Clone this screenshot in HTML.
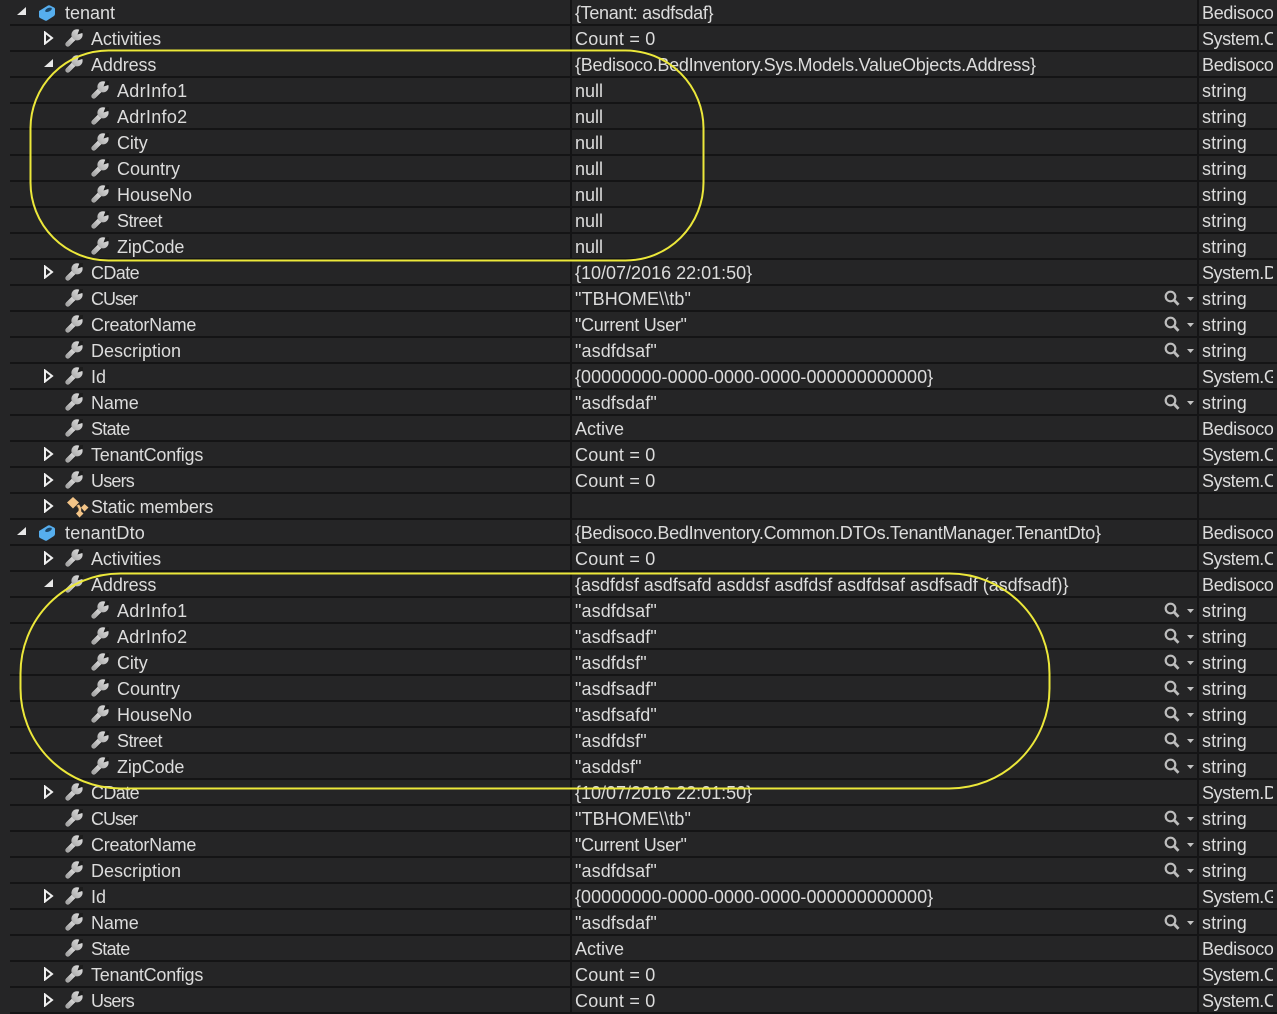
<!DOCTYPE html>
<html><head><meta charset="utf-8">
<style>
html,body{margin:0;padding:0;background:#252526;width:1277px;height:1014px;overflow:hidden}
body{position:relative;font-family:"Liberation Sans",sans-serif;font-size:18px;color:#dcdcdc}
.r{position:absolute;left:0;width:1277px;height:26px;line-height:27px;white-space:nowrap}
.r:after{content:"";position:absolute;left:10px;right:0;top:24px;height:2px;background:#141415}
.n,.v,.t{position:absolute;top:0}
.n{left:91px}.l0 .n{left:65px}.l2 .n{left:117px}
.v{left:575px}.t{left:1202px;width:71px;overflow:hidden}
.r svg{position:absolute}
.ic{left:65px;top:3px}.l0 .ic{left:38px}.l2 .ic{left:91px}
.ar{left:43px;top:5px}.l0 .ar{left:16px}
.m{left:1163px;top:4px}
.c{position:absolute;top:0;width:2px;height:1014px;background:#141415}
#o{position:absolute;left:0;top:0}
.t{letter-spacing:.15px}
.b{letter-spacing:-.3px}
.y{letter-spacing:-.45px}
.cnt{letter-spacing:.22px}
.q{letter-spacing:.1px}
.cu{letter-spacing:-.3px}
.lg{letter-spacing:-.27px}
.ten{letter-spacing:-.33px}
.idv{letter-spacing:.05px}
.ad2{letter-spacing:-.03px}
.tc{letter-spacing:-.23px}
.cn{letter-spacing:-.27px}
.sm{letter-spacing:-.2px}
.st{letter-spacing:-.5px}
.ai{letter-spacing:.3px}
.us{letter-spacing:-.8px}
.cd{letter-spacing:-.6px}
.cus{letter-spacing:-1px}
.sta{letter-spacing:-.7px}
.act{letter-spacing:-.1px}
.td{letter-spacing:.22px}
</style></head><body>
<svg width="0" height="0" style="position:absolute">
<defs>
<linearGradient id="g" x1="1" y1="0" x2="0" y2="1"><stop offset="0" stop-color="#e6e6e6"/><stop offset="1" stop-color="#a6a6a6"/></linearGradient>
<symbol id="w" viewBox="0 0 18 18"><path d="M2.800 15.200L10 8" stroke="#161616" stroke-width="6.600" stroke-linecap="round" fill="none" opacity=".6"/><path d="M2.800 15.200L10 8" stroke="url(#g)" stroke-width="5" stroke-linecap="round" fill="none"/><circle cx="12" cy="5.800" r="5.600" fill="url(#g)"/><path d="M12.500 5.500L14.500 0 18 0 18 3.800z" fill="#1c1c1c"/></symbol>
<symbol id="open" viewBox="0 0 12 12"><path d="M10 2V10H1z" fill="#e8e8e8"/></symbol>
<symbol id="shut" viewBox="0 0 12 14"><path d="M2 1.500L9 7 2 12.500z" fill="none" stroke="#f0f0f0" stroke-width="2"/></symbol>
<symbol id="cube" viewBox="0 0 18 18"><path d="M1 8L10 2.500Q11 2 12 2.500L16 4.500Q17 5 17 6L17 11Q17 12 16 13L9 17.500Q8 18 7 17.500L2 15Q1 14.500 1 13.500Z" fill="#56aeee"/><ellipse cx="10.500" cy="6.800" rx="3.600" ry="1.800" transform="rotate(-25 10.500 6.800)" fill="#1d4667"/></symbol>
<symbol id="mag" viewBox="0 0 18 18"><circle cx="7.500" cy="6.500" r="4.800" fill="none" stroke="#bdbdbd" stroke-width="2.200"/><path d="M11 10L15.500 14.800" stroke="#bdbdbd" stroke-width="2.800"/></symbol>
<symbol id="st" viewBox="0 0 24 22"><path d="M11 9L14 12V16" stroke="#5a452c" stroke-width="2" fill="none"/><path d="M2 6.500L8 1l6 5.500L8 12.500z" fill="#f3c487"/><path d="M16 11.500L19.500 8 23.500 11.500 19.500 15.500z" fill="#f3c487"/><path d="M11 17.500L14.500 14 18.500 17.500 14.500 21.500z" fill="#f3c487"/><path d="M13 9L15 12.500V16" stroke="#f3c487" stroke-width="2.400" fill="none"/></symbol>
</defs></svg>

<div class="r l0" style="top:0"><svg class="ar" width="12" height="12"><use href="#open"/></svg><svg class="ic" width="18" height="18"><use href="#cube"/></svg><span class="n">tenant</span><span class="v ten">{Tenant: asdfsdaf}</span><span class="t b">Bedisoco</span></div>
<div class="r" style="top:26px"><svg class="ar" width="12" height="14"><use href="#shut"/></svg><svg class="ic" width="18" height="18"><use href="#w"/></svg><span class="n act">Activities</span><span class="v cnt">Count = 0</span><span class="t y">System.C</span></div>
<div class="r" style="top:52px"><svg class="ar" width="12" height="12"><use href="#open"/></svg><svg class="ic" width="18" height="18"><use href="#w"/></svg><span class="n act">Address</span><span class="v lg">{Bedisoco.BedInventory.Sys.Models.ValueObjects.Address}</span><span class="t b">Bedisoco</span></div>
<div class="r l2" style="top:78px"><svg class="ic" width="18" height="18"><use href="#w"/></svg><span class="n ai">AdrInfo1</span><span class="v">null</span><span class="t">string</span></div>
<div class="r l2" style="top:104px"><svg class="ic" width="18" height="18"><use href="#w"/></svg><span class="n ai">AdrInfo2</span><span class="v">null</span><span class="t">string</span></div>
<div class="r l2" style="top:130px"><svg class="ic" width="18" height="18"><use href="#w"/></svg><span class="n act">City</span><span class="v">null</span><span class="t">string</span></div>
<div class="r l2" style="top:156px"><svg class="ic" width="18" height="18"><use href="#w"/></svg><span class="n">Country</span><span class="v">null</span><span class="t">string</span></div>
<div class="r l2" style="top:182px"><svg class="ic" width="18" height="18"><use href="#w"/></svg><span class="n">HouseNo</span><span class="v">null</span><span class="t">string</span></div>
<div class="r l2" style="top:208px"><svg class="ic" width="18" height="18"><use href="#w"/></svg><span class="n st">Street</span><span class="v">null</span><span class="t">string</span></div>
<div class="r l2" style="top:234px"><svg class="ic" width="18" height="18"><use href="#w"/></svg><span class="n act">ZipCode</span><span class="v">null</span><span class="t">string</span></div>
<div class="r" style="top:260px"><svg class="ar" width="12" height="14"><use href="#shut"/></svg><svg class="ic" width="18" height="18"><use href="#w"/></svg><span class="n cd">CDate</span><span class="v">{10/07/2016 22:01:50}</span><span class="t y">System.D</span></div>
<div class="r" style="top:286px"><svg class="ic" width="18" height="18"><use href="#w"/></svg><span class="n cus">CUser</span><span class="v q">"TBHOME\\tb"</span><svg class="m" width="32" height="18"><use href="#mag" width="18" height="18"/><path d="M24 7h7l-3.500 4z" fill="#c4c4c4"/></svg><span class="t">string</span></div>
<div class="r" style="top:312px"><svg class="ic" width="18" height="18"><use href="#w"/></svg><span class="n cn">CreatorName</span><span class="v cu">"Current User"</span><svg class="m" width="32" height="18"><use href="#mag" width="18" height="18"/><path d="M24 7h7l-3.500 4z" fill="#c4c4c4"/></svg><span class="t">string</span></div>
<div class="r" style="top:338px"><svg class="ic" width="18" height="18"><use href="#w"/></svg><span class="n">Description</span><span class="v q">"asdfdsaf"</span><svg class="m" width="32" height="18"><use href="#mag" width="18" height="18"/><path d="M24 7h7l-3.500 4z" fill="#c4c4c4"/></svg><span class="t">string</span></div>
<div class="r" style="top:364px"><svg class="ar" width="12" height="14"><use href="#shut"/></svg><svg class="ic" width="18" height="18"><use href="#w"/></svg><span class="n">Id</span><span class="v idv">{00000000-0000-0000-0000-000000000000}</span><span class="t y">System.G</span></div>
<div class="r" style="top:390px"><svg class="ic" width="18" height="18"><use href="#w"/></svg><span class="n act">Name</span><span class="v q">"asdfsdaf"</span><svg class="m" width="32" height="18"><use href="#mag" width="18" height="18"/><path d="M24 7h7l-3.500 4z" fill="#c4c4c4"/></svg><span class="t">string</span></div>
<div class="r" style="top:416px"><svg class="ic" width="18" height="18"><use href="#w"/></svg><span class="n sta">State</span><span class="v">Active</span><span class="t b">Bedisoco</span></div>
<div class="r" style="top:442px"><svg class="ar" width="12" height="14"><use href="#shut"/></svg><svg class="ic" width="18" height="18"><use href="#w"/></svg><span class="n tc">TenantConfigs</span><span class="v cnt">Count = 0</span><span class="t y">System.C</span></div>
<div class="r" style="top:468px"><svg class="ar" width="12" height="14"><use href="#shut"/></svg><svg class="ic" width="18" height="18"><use href="#w"/></svg><span class="n us">Users</span><span class="v cnt">Count = 0</span><span class="t y">System.C</span></div>
<div class="r" style="top:494px"><svg class="ar" width="12" height="14"><use href="#shut"/></svg><svg class="ic" width="24" height="22" style="top:2px"><use href="#st"/></svg><span class="n sm">Static members</span></div>
<div class="r l0" style="top:520px"><svg class="ar" width="12" height="12"><use href="#open"/></svg><svg class="ic" width="18" height="18"><use href="#cube"/></svg><span class="n td">tenantDto</span><span class="v lg">{Bedisoco.BedInventory.Common.DTOs.TenantManager.TenantDto}</span><span class="t b">Bedisoco</span></div>
<div class="r" style="top:546px"><svg class="ar" width="12" height="14"><use href="#shut"/></svg><svg class="ic" width="18" height="18"><use href="#w"/></svg><span class="n act">Activities</span><span class="v cnt">Count = 0</span><span class="t y">System.C</span></div>
<div class="r" style="top:572px"><svg class="ar" width="12" height="12"><use href="#open"/></svg><svg class="ic" width="18" height="18"><use href="#w"/></svg><span class="n act">Address</span><span class="v ad2">{asdfdsf asdfsafd asddsf asdfdsf asdfdsaf asdfsadf (asdfsadf)}</span><span class="t b">Bedisoco</span></div>
<div class="r l2" style="top:598px"><svg class="ic" width="18" height="18"><use href="#w"/></svg><span class="n ai">AdrInfo1</span><span class="v q">"asdfdsaf"</span><svg class="m" width="32" height="18"><use href="#mag" width="18" height="18"/><path d="M24 7h7l-3.500 4z" fill="#c4c4c4"/></svg><span class="t">string</span></div>
<div class="r l2" style="top:624px"><svg class="ic" width="18" height="18"><use href="#w"/></svg><span class="n ai">AdrInfo2</span><span class="v q">"asdfsadf"</span><svg class="m" width="32" height="18"><use href="#mag" width="18" height="18"/><path d="M24 7h7l-3.500 4z" fill="#c4c4c4"/></svg><span class="t">string</span></div>
<div class="r l2" style="top:650px"><svg class="ic" width="18" height="18"><use href="#w"/></svg><span class="n act">City</span><span class="v q">"asdfdsf"</span><svg class="m" width="32" height="18"><use href="#mag" width="18" height="18"/><path d="M24 7h7l-3.500 4z" fill="#c4c4c4"/></svg><span class="t">string</span></div>
<div class="r l2" style="top:676px"><svg class="ic" width="18" height="18"><use href="#w"/></svg><span class="n">Country</span><span class="v q">"asdfsadf"</span><svg class="m" width="32" height="18"><use href="#mag" width="18" height="18"/><path d="M24 7h7l-3.500 4z" fill="#c4c4c4"/></svg><span class="t">string</span></div>
<div class="r l2" style="top:702px"><svg class="ic" width="18" height="18"><use href="#w"/></svg><span class="n">HouseNo</span><span class="v q">"asdfsafd"</span><svg class="m" width="32" height="18"><use href="#mag" width="18" height="18"/><path d="M24 7h7l-3.500 4z" fill="#c4c4c4"/></svg><span class="t">string</span></div>
<div class="r l2" style="top:728px"><svg class="ic" width="18" height="18"><use href="#w"/></svg><span class="n st">Street</span><span class="v q">"asdfdsf"</span><svg class="m" width="32" height="18"><use href="#mag" width="18" height="18"/><path d="M24 7h7l-3.500 4z" fill="#c4c4c4"/></svg><span class="t">string</span></div>
<div class="r l2" style="top:754px"><svg class="ic" width="18" height="18"><use href="#w"/></svg><span class="n act">ZipCode</span><span class="v q">"asddsf"</span><svg class="m" width="32" height="18"><use href="#mag" width="18" height="18"/><path d="M24 7h7l-3.500 4z" fill="#c4c4c4"/></svg><span class="t">string</span></div>
<div class="r" style="top:780px"><svg class="ar" width="12" height="14"><use href="#shut"/></svg><svg class="ic" width="18" height="18"><use href="#w"/></svg><span class="n cd">CDate</span><span class="v">{10/07/2016 22:01:50}</span><span class="t y">System.D</span></div>
<div class="r" style="top:806px"><svg class="ic" width="18" height="18"><use href="#w"/></svg><span class="n cus">CUser</span><span class="v q">"TBHOME\\tb"</span><svg class="m" width="32" height="18"><use href="#mag" width="18" height="18"/><path d="M24 7h7l-3.500 4z" fill="#c4c4c4"/></svg><span class="t">string</span></div>
<div class="r" style="top:832px"><svg class="ic" width="18" height="18"><use href="#w"/></svg><span class="n cn">CreatorName</span><span class="v cu">"Current User"</span><svg class="m" width="32" height="18"><use href="#mag" width="18" height="18"/><path d="M24 7h7l-3.500 4z" fill="#c4c4c4"/></svg><span class="t">string</span></div>
<div class="r" style="top:858px"><svg class="ic" width="18" height="18"><use href="#w"/></svg><span class="n">Description</span><span class="v q">"asdfdsaf"</span><svg class="m" width="32" height="18"><use href="#mag" width="18" height="18"/><path d="M24 7h7l-3.500 4z" fill="#c4c4c4"/></svg><span class="t">string</span></div>
<div class="r" style="top:884px"><svg class="ar" width="12" height="14"><use href="#shut"/></svg><svg class="ic" width="18" height="18"><use href="#w"/></svg><span class="n">Id</span><span class="v idv">{00000000-0000-0000-0000-000000000000}</span><span class="t y">System.G</span></div>
<div class="r" style="top:910px"><svg class="ic" width="18" height="18"><use href="#w"/></svg><span class="n act">Name</span><span class="v q">"asdfsdaf"</span><svg class="m" width="32" height="18"><use href="#mag" width="18" height="18"/><path d="M24 7h7l-3.500 4z" fill="#c4c4c4"/></svg><span class="t">string</span></div>
<div class="r" style="top:936px"><svg class="ic" width="18" height="18"><use href="#w"/></svg><span class="n sta">State</span><span class="v">Active</span><span class="t b">Bedisoco</span></div>
<div class="r" style="top:962px"><svg class="ar" width="12" height="14"><use href="#shut"/></svg><svg class="ic" width="18" height="18"><use href="#w"/></svg><span class="n tc">TenantConfigs</span><span class="v cnt">Count = 0</span><span class="t y">System.C</span></div>
<div class="r" style="top:988px"><svg class="ar" width="12" height="14"><use href="#shut"/></svg><svg class="ic" width="18" height="18"><use href="#w"/></svg><span class="n us">Users</span><span class="v cnt">Count = 0</span><span class="t y">System.C</span></div>

<div class="c" style="left:570px"></div>
<div class="c" style="left:1197px"></div>
<svg id="o" width="1277" height="1014" fill="none" stroke="#ece83a" stroke-width="2">
<rect x="30.500" y="50.500" width="673" height="210" rx="78" ry="78"/>
<rect x="20.500" y="573.500" width="1029" height="215" rx="100" ry="100"/>
</svg>
</body></html>
